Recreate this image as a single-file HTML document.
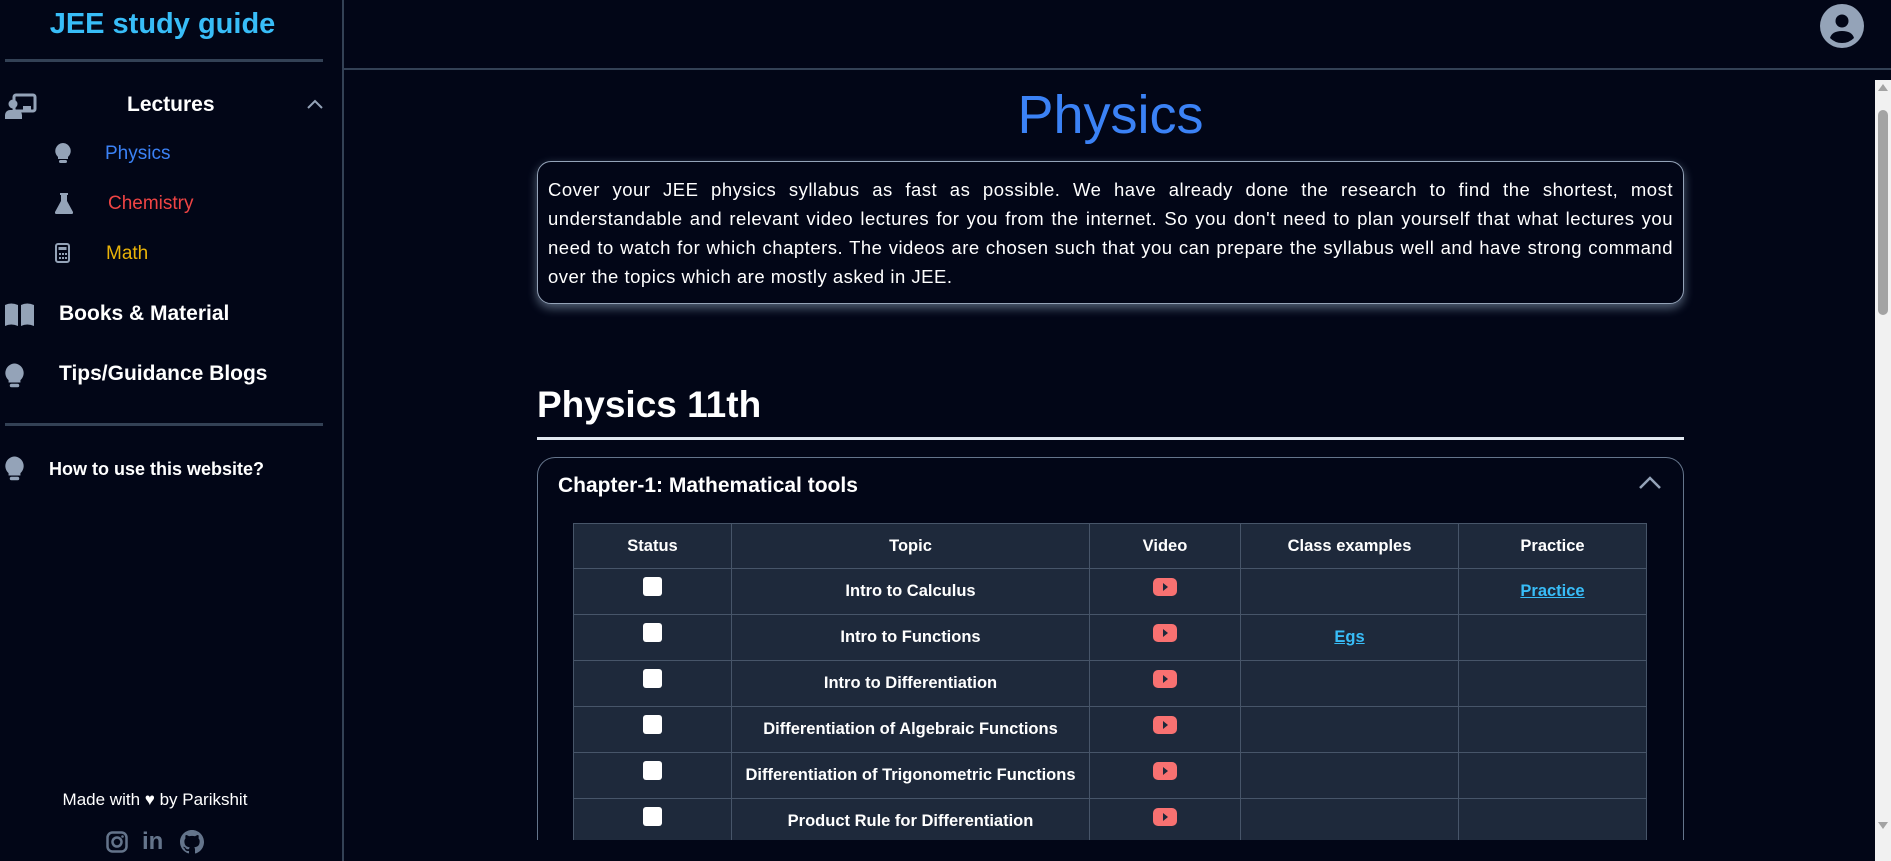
<!DOCTYPE html>
<html style="width:1891px;height:861px;overflow:hidden"><head><meta charset="utf-8"><style>
*{box-sizing:border-box;margin:0;padding:0}
body{width:1891px;height:861px;overflow:hidden;background:#020617;font-family:"Liberation Sans",sans-serif;color:#fff;position:relative}
.side{position:absolute;left:0;top:0;width:344px;height:861px;border-right:2px solid #334155}
.abs{position:absolute}
.hr{position:absolute;left:5px;width:318px;height:3px;background:#334155}
.ic{fill:#94a3b8}
.top{position:absolute;left:344px;top:0;right:0;height:70px;border-bottom:2px solid #334155}
table{border-collapse:collapse;position:absolute;left:573px;top:523px;width:1074px;background:#1e293b;font-size:16.5px;font-weight:bold}
td,th{border:1px solid #475569;text-align:center;height:46px}
th{height:45px}
.cb{display:inline-block;width:19px;height:19px;background:#fff;border-radius:3px;margin-top:-12px}
.yt{display:inline-block;width:24px;height:18px;background:#f87171;border-radius:5px;position:relative;margin-top:-10px}
.yt:after{content:"";position:absolute;left:10px;top:5px;border-left:5px solid #1e293b;border-top:4px solid transparent;border-bottom:4px solid transparent}
a{color:#38bdf8;text-decoration:underline}
</style></head><body>
<div class="side">
<div class="abs" style="left:0;width:325px;top:8px;text-align:center;font-size:29px;font-weight:bold;color:#38bdf8">JEE study guide</div>
<div class="hr" style="top:59px"></div>
<svg class="abs" style="left:5px;top:93px" width="32" height="26" viewBox="0 0 32 26"><rect x="9" y="2" width="21" height="16" rx="2" fill="none" stroke="#94a3b8" stroke-width="3"/><circle cx="8" cy="11" r="4.5" class="ic"/><path d="M0 26v-4a5 5 0 0 1 5-5h7a5 5 0 0 1 5 5v4z" class="ic"/><rect x="18" y="13" width="8" height="5" class="ic"/></svg>
<div class="abs" style="left:127px;top:93px;font-size:21px;font-weight:bold">Lectures</div>
<svg class="abs" style="left:306px;top:98px" width="18" height="12"><path d="M2 10l7-7 7 7" fill="none" stroke="#94a3b8" stroke-width="2"/></svg>
<svg class="abs" style="left:55px;top:143px" width="16" height="21" viewBox="0 0 16 21"><path d="M8 0a8 8 0 0 0-5 14v2h10v-2A8 8 0 0 0 8 0z" class="ic"/><rect x="4" y="17" width="8" height="3" rx="1.5" class="ic"/></svg>
<div class="abs" style="left:105px;top:143px;font-size:19px;color:#3b82f6">Physics</div>
<svg class="abs" style="left:55px;top:193px" width="18" height="21" viewBox="0 0 18 21"><path d="M5 0h8v2h-1v6l6 11a1.5 1.5 0 0 1-1 2H1a1.5 1.5 0 0 1-1-2l6-11V2H5z" class="ic"/></svg>
<div class="abs" style="left:108px;top:193px;font-size:19px;color:#ef4444">Chemistry</div>
<svg class="abs" style="left:55px;top:243px" width="15" height="20" viewBox="0 0 15 20"><rect x="1" y="1" width="13" height="18" rx="2" fill="none" stroke="#94a3b8" stroke-width="2"/><rect x="3.5" y="4" width="8" height="3" class="ic"/><path d="M4 10h2v2H4zM7 10h2v2H7zM10 10h2v2h-2zM4 14h2v2H4zM7 14h2v2H7zM10 14h2v2h-2z" class="ic"/></svg>
<div class="abs" style="left:106px;top:243px;font-size:19px;color:#eab308">Math</div>
<svg class="abs" style="left:5px;top:303px" width="29" height="23" viewBox="0 0 29 23"><path d="M0 2q6-3 13 0v21q-7-3-13 0zM16 2q6-3 13 0v21q-7-3-13 0z" class="ic"/></svg>
<div class="abs" style="left:59px;top:302px;font-size:21px;font-weight:bold">Books &amp; Material</div>
<svg class="abs" style="left:5px;top:363px" width="19" height="26" viewBox="0 0 16 21"><path d="M8 0a8 8 0 0 0-5 14v2h10v-2A8 8 0 0 0 8 0z" class="ic"/><rect x="4" y="17" width="8" height="3" rx="1.5" class="ic"/></svg>
<div class="abs" style="left:59px;top:362px;font-size:21px;font-weight:bold">Tips/Guidance Blogs</div>
<div class="hr" style="top:423px"></div>
<svg class="abs" style="left:5px;top:456px" width="19" height="26" viewBox="0 0 16 21"><path d="M8 0a8 8 0 0 0-5 14v2h10v-2A8 8 0 0 0 8 0z" class="ic"/><rect x="4" y="17" width="8" height="3" rx="1.5" class="ic"/></svg>
<div class="abs" style="left:49px;top:459px;font-size:18px;font-weight:bold">How to use this website?</div>
<div class="abs" style="left:0;width:310px;top:790px;text-align:center;font-size:17px">Made with ♥ by Parikshit</div>
<svg class="abs" style="left:106px;top:831px" width="22" height="22" viewBox="0 0 22 22"><rect x="1.5" y="1.5" width="19" height="19" rx="5" fill="none" stroke="#64748b" stroke-width="2.5"/><circle cx="11" cy="11" r="4.5" fill="none" stroke="#64748b" stroke-width="2.5"/><circle cx="16.5" cy="5.5" r="1.3" fill="#64748b"/></svg>
<div class="abs" style="left:142px;top:828px;font-size:24px;font-weight:bold;color:#64748b">in</div>
<svg class="abs" style="left:180px;top:830px" width="24" height="24" viewBox="0 0 16 16"><path fill="#64748b" d="M8 0C3.580 0 0 3.58 0 8c0 3.54 2.29 6.53 5.47 7.59.4.07.55-.17.55-.38v-1.33c-2.230.48-2.7-1.07-2.7-1.070-.36-.92-.89-1.17-.89-1.17-.73-.5.06-.49.06-.49.8.06 1.23.83 1.23.83.72 1.22 1.87.87 2.33.66.07-.52.28-.87.5-1.07-1.78-.2-3.64-.89-3.64-3.95 0-.87.31-1.59.82-2.15-.08-.2-.36-1.02.08-2.12 0 0 .67-.21 2.2.82a7.6 7.6 0 0 1 4 0c1.53-1.04 2.2-.82 2.2-.82.44 1.1.16 1.92.08 2.12.51.56.82 1.27.82 2.15 0 3.07-1.87 3.75-3.65 3.95.29.25.54.73.54 1.48v2.2c0 .21.15.46.55.38A8 8 0 0 0 16 8c0-4.42-3.58-8-8-8z"/></svg>
</div>
<div class="top"></div>
<svg class="abs" style="left:1819px;top:3px" width="46" height="46" viewBox="0 0 46 46"><circle cx="23" cy="23" r="22" fill="#94a3b8"/><circle cx="23" cy="18" r="6.5" fill="#020617"/><path d="M11 35q2-7 12-7t12 7q-5 5-12 5t-12-5z" fill="#020617"/></svg>
<div class="abs" style="left:537px;top:457px;width:1147px;height:404px;border:1px solid #64748b;border-bottom:none;border-radius:18px 18px 0 0"></div>
<div class="abs" style="left:537px;width:1147px;top:84px;text-align:center;font-size:54px;color:#3b82f6">Physics</div>
<div class="abs" style="left:537px;top:161px;width:1147px;height:143px;border:1px solid #94a3b8;border-radius:14px;box-shadow:0 4px 10px rgba(186,212,240,.45);padding:13px 10px;font-size:18.5px;line-height:29px;text-align:justify;letter-spacing:.5px">Cover your JEE physics syllabus as fast as possible. We have already done the research to find the shortest, most understandable and relevant video lectures for you from the internet. So you don't need to plan yourself that what lectures you need to watch for which chapters. The videos are chosen such that you can prepare the syllabus well and have strong command over the topics which are mostly asked in JEE.</div>
<div class="abs" style="left:537px;top:384px;font-size:37px;font-weight:bold">Physics 11th</div>
<div class="abs" style="left:537px;top:437px;width:1147px;height:3px;background:#e2e8f0"></div>
<div class="abs" style="left:558px;top:474px;font-size:21px;font-weight:bold">Chapter-1: Mathematical tools</div>
<svg class="abs" style="left:1638px;top:474px" width="24" height="16"><path d="M2 14l10-10 10 10" fill="none" stroke="#94a3b8" stroke-width="2.5"/></svg>
<table>
<tr><th style="width:158px">Status</th><th style="width:358px">Topic</th><th style="width:151px">Video</th><th style="width:218px">Class examples</th><th>Practice</th></tr>
<tr><td><span class="cb"></span></td><td>Intro to Calculus</td><td><span class="yt"></span></td><td></td><td><a>Practice</a></td></tr>
<tr><td><span class="cb"></span></td><td>Intro to Functions</td><td><span class="yt"></span></td><td><a>Egs</a></td><td></td></tr>
<tr><td><span class="cb"></span></td><td>Intro to Differentiation</td><td><span class="yt"></span></td><td></td><td></td></tr>
<tr><td><span class="cb"></span></td><td>Differentiation of Algebraic Functions</td><td><span class="yt"></span></td><td></td><td></td></tr>
<tr><td><span class="cb"></span></td><td>Differentiation of Trigonometric Functions</td><td><span class="yt"></span></td><td></td><td></td></tr>
<tr><td><span class="cb"></span></td><td>Product Rule for Differentiation</td><td><span class="yt"></span></td><td></td><td></td></tr>
</table>
<div class="abs" style="left:346px;top:840px;width:1529px;height:21px;background:#020617"></div>
<div class="abs" style="left:1875px;top:80px;width:16px;height:781px;background:#f1f1f1"></div>
<div class="abs" style="left:1878px;top:110px;width:10px;height:205px;background:#a3a3a3;border-radius:5px"></div>
<div class="abs" style="left:1878px;top:84px;border-bottom:7px solid #a3a3a3;border-left:5px solid transparent;border-right:5px solid transparent"></div>
<div class="abs" style="left:1878px;top:822px;border-top:7px solid #a3a3a3;border-left:5px solid transparent;border-right:5px solid transparent"></div>
</body></html>
